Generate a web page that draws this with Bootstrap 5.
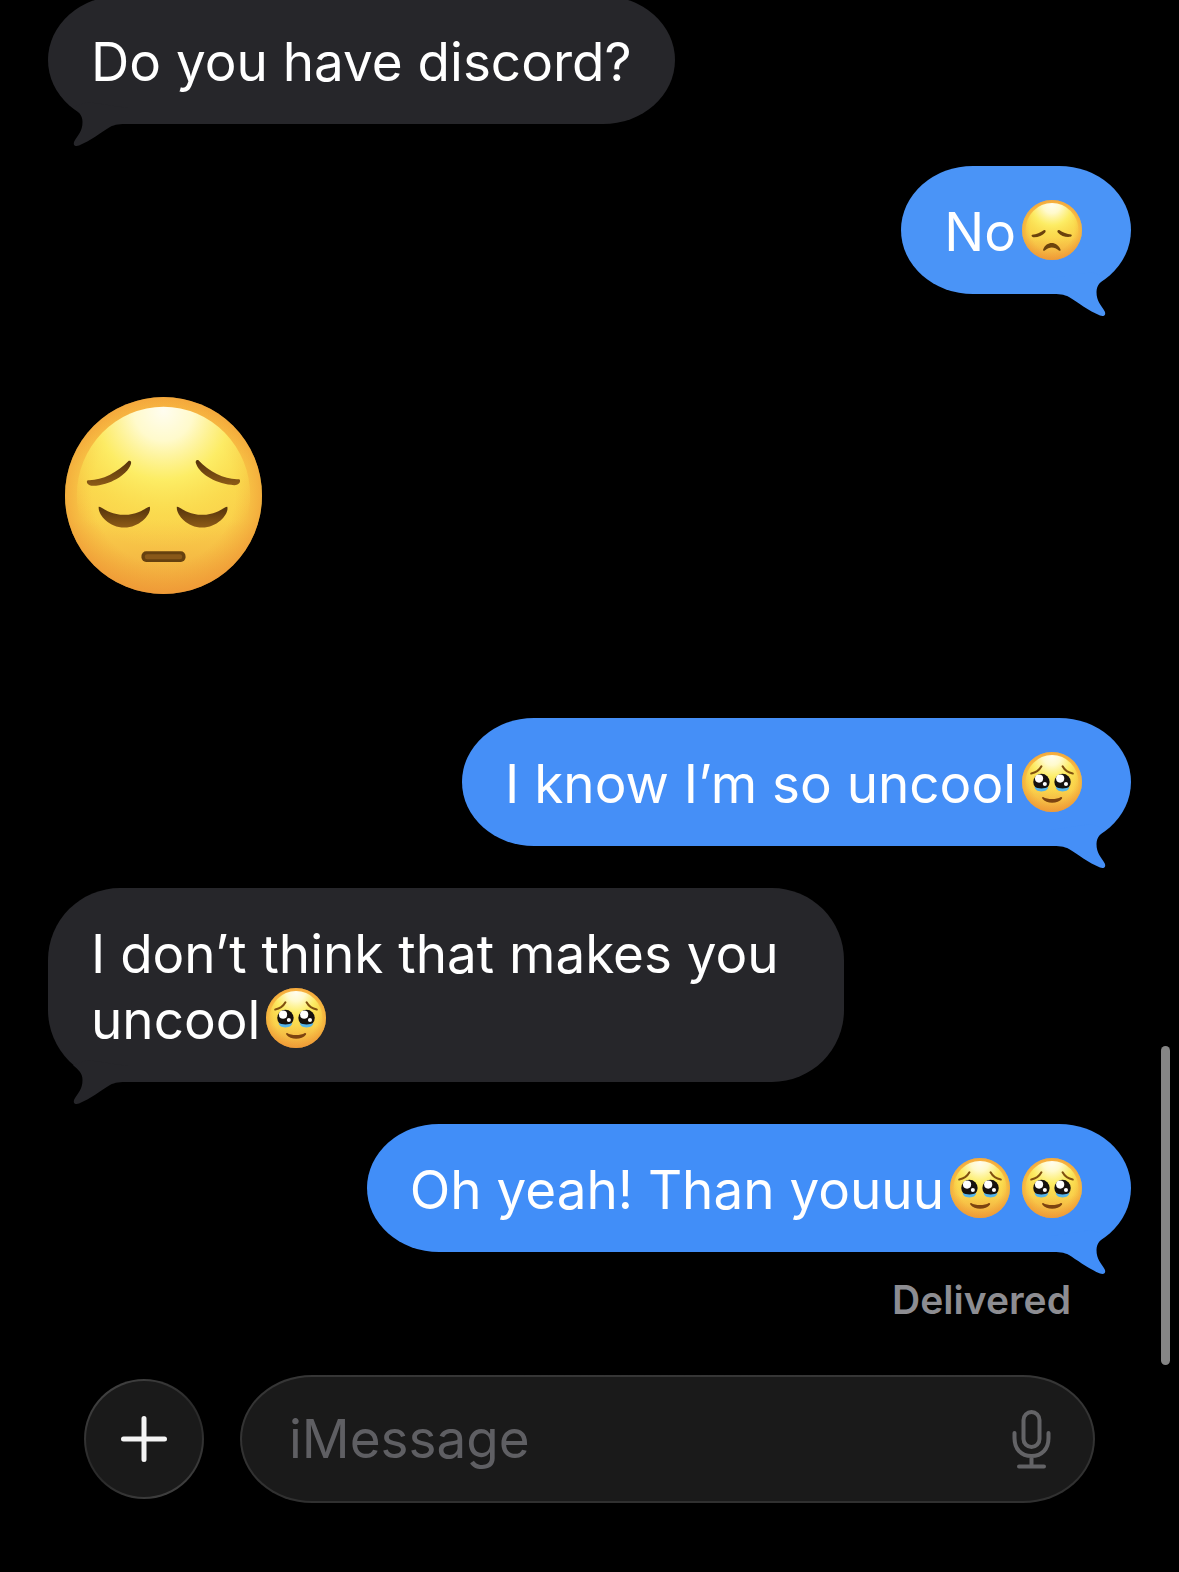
<!DOCTYPE html>
<html lang="en" data-bs-theme="dark">
<head>
<meta charset="utf-8">
<meta name="viewport" content="width=device-width, initial-scale=1">
<title>Messages</title>
<link href="https://cdn.jsdelivr.net/npm/bootstrap@5.3.0/dist/css/bootstrap.min.css" rel="stylesheet">
<style>
  body { background: #000; color: #fff; font-family: Inter, "Liberation Sans", sans-serif; font-size: 53px; line-height: 66px; overflow-x: hidden; }
  .thread { padding: 0 48px; margin-top: -4px; gap: 42px; }
  .bubble { position: relative; max-width: 796px; padding: 33px 43px 29px; border-radius: 72px / 64px; background: var(--tone); color: #fff; }
  .bubble-in { --tone: #26262a; align-self: flex-start; }
  .bubble-out { --tone: #458ff7; align-self: flex-end; }
  .bubble-first { --tone: #4a94f7; }
  .bubble-last { --tone: #418ef8; }
  .bubble-tall { border-radius: 72px; }
  .tail { position: absolute; left: 0; bottom: -24px; width: 100px; height: 48px; fill: var(--tone); }
  .bubble-out .tail { left: auto; right: 0; transform: scaleX(-1); }
  .emoji { width: 60px; height: 60px; margin: 0 6px; vertical-align: -9px; }
  .emoji-big { width: 197px; height: 197px; margin: 61px 17px 82px; }
  .receipt { padding: 0 60px; margin-top: -17px; font-size: 39px; line-height: 46px; font-weight: 600; color: #8d8d92; }
  .composer { padding: 52px 84px 69px; gap: 36px; }
  .glass { border: 2px solid transparent; background: linear-gradient(#1a1a1a, #1a1a1a) padding-box, linear-gradient(150deg, #484848, #2b2b2b 45%, #2b2b2b 60%, #484848) border-box; }
  .add-btn { width: 120px; height: 120px; flex: none; }
  .field { height: 128px; min-width: 0; border-radius: 72px / 64px; padding: 0 40px 0 47px; background: linear-gradient(#1a1a1a, #1a1a1a) padding-box, linear-gradient(#363636, #303030) border-box; }
  .field input { font-size: 53px; line-height: 66px; min-width: 0; }
  .field input::placeholder { color: #5f5f63; opacity: 1; }
  .field input:focus { outline: none; }
  .scroll-thumb { position: fixed; right: 9px; top: 1046px; width: 9px; height: 319px; border-radius: 5px; background: #858585; }
</style>
<script src="https://cdn.jsdelivr.net/npm/bootstrap@5.3.0/dist/js/bootstrap.bundle.min.js"></script>
</head>
<body>

<svg width="0" height="0" class="position-absolute" aria-hidden="true">
  <defs>
    <linearGradient id="skin" x1="0" y1="0" x2="0" y2="1">
      <stop offset="0" stop-color="#f9b944"/><stop offset=".35" stop-color="#fad04a"/>
      <stop offset=".62" stop-color="#fad04b"/><stop offset="1" stop-color="#f1a83e"/>
    </linearGradient>
    <radialGradient id="rim" cx=".5" cy=".48" r=".52">
      <stop offset=".7" stop-color="#f09a32" stop-opacity="0"/><stop offset="1" stop-color="#ee9233" stop-opacity=".65"/>
    </radialGradient>
    <radialGradient id="shine" cx=".5" cy=".02" r=".78">
      <stop offset="0" stop-color="#fffdf0"/><stop offset=".22" stop-color="#fffacc"/>
      <stop offset=".5" stop-color="#fdf26a" stop-opacity=".85"/><stop offset=".75" stop-color="#fbe653" stop-opacity=".45"/>
      <stop offset="1" stop-color="#fbdc4d" stop-opacity="0"/>
    </radialGradient>
    <linearGradient id="lid" x1="0" y1="0" x2="0" y2="1">
      <stop offset="0" stop-color="#54330b"/><stop offset="1" stop-color="#8d5b17"/>
    </linearGradient>
    <symbol id="tail-shape" viewBox="0 -24 100 48">
      <path d="M25-17C30-12.500 34.500-9 34.500-2C34.500 7 30 11 26.500 17C24.500 21 27 23 31 21.500C42 17 54 8 62 3C67 .3 72 0 80 0L80-16L40-22Z"/>
    </symbol>
    <symbol id="face" viewBox="0 0 100 100">
      <circle cx="50" cy="50" r="50" fill="url(#skin)"/>
      <circle cx="50" cy="50" r="50" fill="url(#rim)"/>
      <ellipse cx="50" cy="50" rx="44" ry="45" fill="url(#shine)"/>
    </symbol>
    <symbol id="pensive" viewBox="44 37 590 590">
      <use href="#face" x="44" y="37" width="590" height="590"/>
      <g fill="url(#lid)">
        <path d="M235 228C241 226 244 232 241 239C229 271 178 301 128 303C113 303 105 291 112 286C152 288 199 265 235 228Z"/>
        <path d="M443 226C437 224 433 230 437 238C448 270 501 299 551 301C566 301 572 288 566 283C526 286 478 264 443 226Z"/>
        <path d="M145 366C155 365 175 390 222 390C267 390 287 366 298 366C304 386 269 428 222 428C174 428 142 388 145 366Z"/>
        <path d="M379 366C389 365 409 390 455 390C500 390 519 366 530 366C536 386 502 428 455 428C408 428 376 388 379 366Z"/>
      </g>
      <rect x="273" y="499" width="132" height="32" rx="14" fill="#66410f"/>
      <rect x="283" y="508" width="112" height="15" rx="7" fill="#885819"/>
    </symbol>
    <symbol id="disappointed" viewBox="401 135 176 176">
      <use href="#face" x="401" y="135" width="176" height="176"/>
      <g fill="#6b420d">
        <path d="M431 237C443 237 455 230 466 223C470 222 472 226 469 230C461 240 446 245 434 244C429 243 427 238 431 237Z"/>
        <path d="M545 236C533 236 521 230 510 223C506 222 503 226 506 230C515 240 530 245 542 243C547 242 549 237 545 236Z"/>
        <path d="M463 280C468 267 478 261 488 261C499 261 509 268 514 280C515 284 512 285 509 283C496 271 481 271 468 283C465 285 462 284 463 280Z"/>
      </g>
    </symbol>
    <symbol id="pleading" viewBox="712 324 176 176">
      <use href="#face" x="712" y="324" width="176" height="176"/>
      <g fill="none" stroke="#80500f" stroke-width="6" stroke-linecap="round">
        <path d="M739 387C751 385 763 377 769 366"/>
        <path d="M861 387C849 385 837 377 831 366"/>
      </g>
      <g id="wet-eye">
        <circle cx="769" cy="412" r="24" fill="#16120f"/>
        <path d="M749 427C758 432 780 432 789 427C788 435 781 440 769 440C757 440 750 435 749 427Z" fill="#55b5ea"/>
        <circle cx="762" cy="402" r="12" fill="#fff"/>
        <circle cx="779" cy="418" r="6" fill="#fff"/>
      </g>
      <use href="#wet-eye" x="62"/>
      <path d="M774 456C786 464 814 464 826 456C829 455 831 458 829 461C818 477 783 477 772 461C770 458 771 455 774 456Z" fill="#7c4310"/>
    </symbol>
  </defs>
</svg>

<main class="thread d-flex flex-column">
  <div class="bubble bubble-in">Do you have discord?<svg class="tail" aria-hidden="true"><use href="#tail-shape"/></svg></div>
  <div class="bubble bubble-out bubble-first">No<svg class="emoji" role="img" aria-label="Disappointed face"><use href="#disappointed"/></svg><svg class="tail" aria-hidden="true"><use href="#tail-shape"/></svg></div>
  <svg class="emoji-big" role="img" aria-label="Pensive face"><use href="#pensive"/></svg>
  <div class="bubble bubble-out">I know I’m so uncool<svg class="emoji" role="img" aria-label="Face holding back tears"><use href="#pleading"/></svg><svg class="tail" aria-hidden="true"><use href="#tail-shape"/></svg></div>
  <div class="bubble bubble-in bubble-tall">I don’t think that makes you uncool<svg class="emoji" role="img" aria-label="Face holding back tears"><use href="#pleading"/></svg><svg class="tail" aria-hidden="true"><use href="#tail-shape"/></svg></div>
  <div class="bubble bubble-out bubble-last">Oh yeah! Than youuu<svg class="emoji" role="img" aria-label="Face holding back tears"><use href="#pleading"/></svg><svg class="emoji" role="img" aria-label="Face holding back tears"><use href="#pleading"/></svg><svg class="tail" aria-hidden="true"><use href="#tail-shape"/></svg></div>
  <div class="receipt align-self-end">Delivered</div>
</main>

<form class="composer d-flex align-items-center">
  <button type="button" class="add-btn glass rounded-circle p-0 d-flex align-items-center justify-content-center" aria-label="Add attachment">
    <svg width="46" height="46" viewBox="0 0 46 46" fill="none" stroke="#f4f4f4" stroke-width="5" stroke-linecap="round"><path d="M23 2.500V43.500M2.500 23H43.500"/></svg>
  </button>
  <div class="field glass d-flex align-items-center flex-grow-1">
    <input type="text" class="flex-grow-1 border-0 bg-transparent p-0 text-white" placeholder="iMessage" aria-label="iMessage">
    <button type="button" class="btn p-0 border-0 d-flex" aria-label="Dictate">
      <svg width="42" height="60" viewBox="0 0 42 60" fill="none" stroke="#636366" stroke-width="4" stroke-linecap="round"><rect x="12.500" y="3" width="16" height="35" rx="8"/><path d="M3.500 24V29C3.500 40 10 47 20.500 47S37.500 40 37.500 29V24M20.500 47V57M8 57.500H33"/></svg>
    </button>
  </div>
</form>

<div class="scroll-thumb" aria-hidden="true"></div>
</body>
</html>
